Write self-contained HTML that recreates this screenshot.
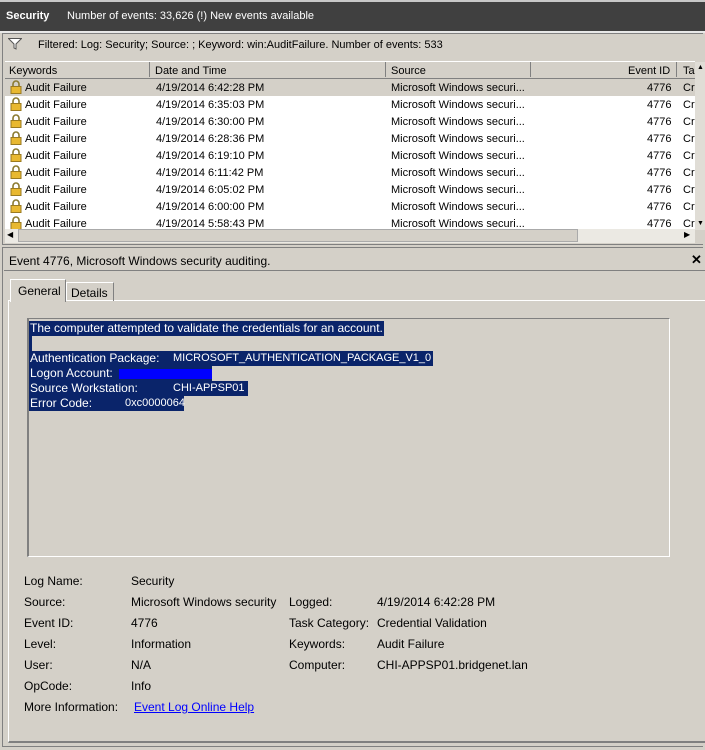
<!DOCTYPE html><html><head><style>
body{margin:0;width:705px;height:750px;background:#d4d0c8;font-family:"Liberation Sans",sans-serif;font-size:11px;position:relative;overflow:hidden;color:#000}
.a{position:absolute;white-space:nowrap}
.row{position:absolute;left:5px;width:690px;height:17px;background:#fff}
.row span{position:absolute;top:3px}
.lock{position:absolute;left:5px;top:1px;width:12px;height:14px}
.sel{background:#0a246a;color:#fff;font-size:12px;height:15px;line-height:15px}
</style></head><body>
<div class="a" style="left:0;top:0;width:705px;height:31px;background:#404040;border-top:2px solid #c8c8c8;box-sizing:border-box"></div>
<div class="a" style="left:6px;top:10px;color:#fff;font-weight:bold">Security</div>
<div class="a" style="left:67px;top:10px;color:#fff">Number of events: 33,626 (!) New events available</div>
<div class="a" style="left:0;top:31px;width:705px;height:2px;background:#e8e8e8"></div>
<div class="a" style="left:2px;top:33px;width:700px;height:210px;border:1px solid #808080;border-right:none"></div>
<svg class="a" style="left:8px;top:38px" width="14" height="12"><path d="M0.5 0.5H13.5L8 6V11L6 10V6Z" fill="#fff" stroke="#555"/></svg>
<div class="a" style="left:38px;top:39px">Filtered: Log: Security; Source: ; Keyword: win:AuditFailure. Number of events: 533</div>
<div class="a" style="left:5px;top:61px;width:690px;height:16px;background:#d4d0c8;border-top:1px solid #fff;border-bottom:1px solid #808080"></div>
<div class="a" style="left:149px;top:62px;width:1px;height:15px;background:#808080"></div>
<div class="a" style="left:385px;top:62px;width:1px;height:15px;background:#808080"></div>
<div class="a" style="left:530px;top:62px;width:1px;height:15px;background:#808080"></div>
<div class="a" style="left:676px;top:62px;width:1px;height:15px;background:#808080"></div>
<div class="a" style="left:9px;top:65px">Keywords</div>
<div class="a" style="left:155px;top:65px">Date and Time</div>
<div class="a" style="left:391px;top:65px">Source</div>
<div class="a" style="left:628px;top:65px">Event ID</div>
<div class="a" style="left:683px;top:65px">Ta</div>
<div id="rows"></div>
<div class="a" style="left:695px;top:62px;width:10px;height:168px;background:#e0ddd6"></div>
<div class="a" style="left:697px;top:64px;font-size:7px">▲</div>
<div class="a" style="left:697px;top:220px;font-size:7px">▼</div>
<div class="a" style="left:5px;top:229px;width:690px;height:14px;background:#ebe9e3"></div>
<div class="a" style="left:18px;top:229px;width:560px;height:13px;background:#d4d0c8;border:1px solid #aaa;box-sizing:border-box"></div>
<div class="a" style="left:7px;top:230px;font-size:8px">◀</div>
<div class="a" style="left:684px;top:230px;font-size:8px">▶</div>
<div class="a" style="left:2px;top:247px;width:700px;height:498px;border:1px solid #808080;border-right:none"></div>
<div class="a" style="left:9px;top:254px;font-size:12px">Event 4776, Microsoft Windows security auditing.</div>
<div class="a" style="left:691px;top:252px;font-weight:bold;font-size:13px">✕</div>
<div class="a" style="left:4px;top:270px;width:701px;height:1px;background:#808080"></div>
<div class="a" style="left:8px;top:300px;width:697px;height:440px;border:1px solid #fff;border-right:none;border-bottom:2px solid #808080"></div>
<div class="a" style="left:10px;top:279px;width:54px;height:22px;background:#d4d0c8;border:1px solid #fff;border-bottom:none;border-right:1px solid #808080"></div>
<div class="a" style="left:18px;top:284px;font-size:12px">General</div>
<div class="a" style="left:66px;top:282px;width:46px;height:18px;border:1px solid #fff;border-right:1px solid #808080;border-bottom:none"></div>
<div class="a" style="left:71px;top:286px;font-size:12px">Details</div>
<div class="a" style="left:27px;top:318px;width:643px;height:239px;border-top:1px solid #808080;border-left:2px solid #808080;border-right:1px solid #fff;border-bottom:1px solid #fff;box-sizing:border-box"></div>
<div class="a sel" style="left:29px;top:321px;width:354px;padding-left:1px">The computer attempted to validate the credentials for an account.</div>
<div class="a sel" style="left:29px;top:336px;width:3px"></div>
<div class="a sel" style="left:29px;top:351px;width:404px"><span style="padding-left:1px">Authentication Package:</span><span style="position:absolute;left:144px;font-size:11px">MICROSOFT_AUTHENTICATION_PACKAGE_V1_0</span></div>
<div class="a sel" style="left:29px;top:366px;width:183px"><span style="padding-left:1px">Logon Account:</span><span style="position:absolute;left:90px;top:3px;background:#0000ff;width:93px;height:10px"></span></div>
<div class="a sel" style="left:29px;top:381px;width:219px"><span style="padding-left:1px">Source Workstation:</span><span style="position:absolute;left:144px;font-size:11px">CHI-APPSP01</span></div>
<div class="a sel" style="left:29px;top:396px;width:155px"><span style="padding-left:1px">Error Code:</span><span style="position:absolute;left:96px;font-size:11px">0xc0000064</span></div>
<div style="font-size:12px">
<div class="a" style="left:24px;top:574px">Log Name:</div><div class="a" style="left:131px;top:574px">Security</div>
<div class="a" style="left:24px;top:595px">Source:</div><div class="a" style="left:131px;top:595px">Microsoft Windows security</div>
<div class="a" style="left:289px;top:595px">Logged:</div><div class="a" style="left:377px;top:595px">4/19/2014 6:42:28 PM</div>
<div class="a" style="left:24px;top:616px">Event ID:</div><div class="a" style="left:131px;top:616px">4776</div>
<div class="a" style="left:289px;top:616px">Task Category:</div><div class="a" style="left:377px;top:616px">Credential Validation</div>
<div class="a" style="left:24px;top:637px">Level:</div><div class="a" style="left:131px;top:637px">Information</div>
<div class="a" style="left:289px;top:637px">Keywords:</div><div class="a" style="left:377px;top:637px">Audit Failure</div>
<div class="a" style="left:24px;top:658px">User:</div><div class="a" style="left:131px;top:658px">N/A</div>
<div class="a" style="left:289px;top:658px">Computer:</div><div class="a" style="left:377px;top:658px">CHI-APPSP01.bridgenet.lan</div>
<div class="a" style="left:24px;top:679px">OpCode:</div><div class="a" style="left:131px;top:679px">Info</div>
<div class="a" style="left:24px;top:700px">More Information:</div><div class="a" style="left:134px;top:700px;color:#0000ff;text-decoration:underline">Event Log Online Help</div>
</div>
<script>
var t=["6:42:28","6:35:03","6:30:00","6:28:36","6:19:10","6:11:42","6:05:02","6:00:00","5:58:43"],h="";
t.forEach(function(x,i){h+='<div class="row" style="top:'+(79+i*17)+'px;'+(i==0?'background:#d4d0c8':'')+'"><svg class="lock" viewBox="0 0 12 14"><path d="M3 7V4a3 3 0 0 1 6 0v3" fill="none" stroke="#8a7a30" stroke-width="1.6"/><rect x="1" y="6.5" width="10" height="7" fill="#e8b830" stroke="#9a7a20"/></svg><span style="left:20px">Audit Failure</span><span style="left:151px">4/19/2014 '+x+' PM</span><span style="left:386px">Microsoft Windows securi...</span><span style="left:642px">4776</span><span style="left:678px">Cr</span></div>'});
document.getElementById("rows").innerHTML=h;
</script>
</body></html>
